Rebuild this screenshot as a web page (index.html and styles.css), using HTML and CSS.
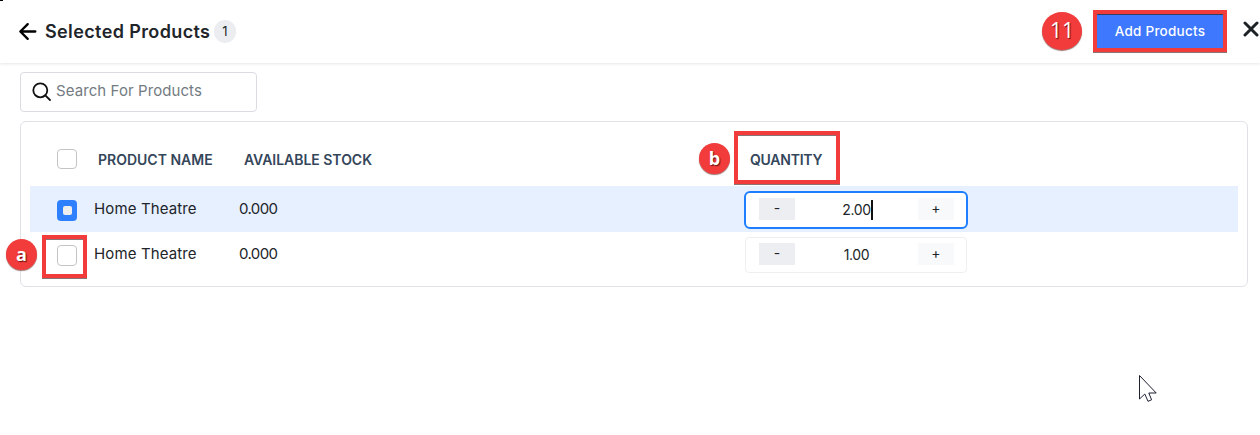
FILE: index.html
```html
<!DOCTYPE html>
<html lang="en">
<head>
<meta charset="utf-8">
<title>Selected Products</title>
<link rel="stylesheet" href="styles.css">
</head>
<body>
<header class="topbar">
  <svg class="back" viewBox="0 0 18 18"><path d="M9.2 2 L2.2 9 L9.2 16 M2.4 9 H16.4"/></svg>
  <h1 class="title">Selected Products</h1>
  <span class="count">1</span>
  <div class="actions">
    <div class="callout"><span class="marker marker-large">11</span></div>
    <button class="add"><span class="add-label">Add Products</span></button>
    <svg class="close" viewBox="0 0 16 16"><path d="M2 2 L14 14 M14 2 L2 14"/></svg>
  </div>
</header>
<main class="content">
  <div class="search">
    <svg class="lens" viewBox="0 0 20 20"><circle cx="8.3" cy="8.3" r="7"/><path d="M13.3 13.3 L18 18"/></svg>
    <span class="placeholder">Search For Products</span>
  </div>
  <section class="card">
    <div class="row head">
      <span class="check"></span>
      <span class="th name">PRODUCT NAME</span>
      <span class="th stock">AVAILABLE STOCK</span>
      <span class="th qty">QUANTITY</span>
    </div>
    <div class="row selected">
      <span class="check on"></span>
      <span class="td name">Home Theatre</span>
      <span class="td stock">0.000</span>
      <div class="stepper focus"><span class="minus">-</span><span class="value">2.00<i class="caret"></i></span><span class="plus">+</span></div>
    </div>
    <div class="row last">
      <span class="check"></span>
      <span class="td name">Home Theatre</span>
      <span class="td stock">0.000</span>
      <div class="stepper"><span class="minus">-</span><span class="value">1.00</span><span class="plus">+</span></div>
    </div>
  </section>
</main>
<span class="corner"></span>
<span class="marker mark-a">a</span>
<span class="marker mark-b">b</span>
<span class="frame frame-a"></span>
<span class="frame frame-b"></span>
<svg class="cursor" viewBox="0 0 20 30"><path d="M1.5 1.5 V25 L6.8 20 L10 27.3 L13.6 25.8 L10.8 19 H18.2 Z"/></svg>
</body>
</html>
```
FILE: styles.css
```css
* { box-sizing: border-box; }
body {
  margin: 0;
  height: 435px;
  overflow: hidden;
  position: relative;
  background: #fff;
  color: #212529;
  font-family: Inter, "Open Sans", sans-serif;
}
.topbar {
  height: 63px;
  display: flex;
  align-items: center;
  padding-left: 18px;
  box-shadow: 0 1px 3px rgba(0, 0, 0, .1);
}
.back { width: 19px; height: 19px; fill: none; stroke: #000; stroke-width: 2.2; stroke-linecap: round; stroke-linejoin: round; }
.title { margin: 0 0 0 8px; width: 165px; font-size: 18px; line-height: 27px; font-weight: 600; letter-spacing: .38px; white-space: nowrap; }
.count { margin-left: 4px; width: 22px; height: 23px; border-radius: 12px; background: #ecedf1; font-size: 13px; line-height: 22px; text-align: center; }
.actions { margin-left: auto; height: 63px; display: flex; align-items: center; }
.marker {
  display: block;
  width: 31px;
  height: 31px;
  border-radius: 50%;
  background: #f23b3b;
  color: #fff;
  font: 700 18px/31px "Open Sans", sans-serif;
  text-align: center;
  text-shadow: 1px 1px 1px #611;
  box-shadow: 0 1px 1px rgba(90, 30, 30, .6);
}
.marker-large { width: 40px; height: 38px; margin: 0 11px 2px 0; font-weight: 400; font-size: 21px; line-height: 37px; }
.add {
  width: 134px;
  height: 42px;
  padding: 0 0 1px;
  margin: 0 16px 1px 0;
  border: 4px solid #f23b3b;
  background: #3d78ff;
  color: #fff;
  box-shadow: 0 1px #8c7474, inset 0 1px #33405f;
  font: 500 13.5px Inter, sans-serif;
  letter-spacing: .25px;
  white-space: nowrap;
}
.close { width: 16px; height: 16px; margin: 0 1px 5px 0; fill: none; stroke: #1d2226; stroke-width: 3; stroke-linecap: round; }
.content { padding: 9px 12px 0 20px; }
.search { width: 237px; height: 40px; display: flex; align-items: center; padding-left: 11px; border: 1px solid #dadce2; border-radius: 4px; }
.lens { width: 20px; height: 20px; margin-right: 4px; fill: none; stroke: #111; stroke-width: 1.8; stroke-linecap: round; }
.placeholder { color: #737b82; font-size: 15px; line-height: 22px; letter-spacing: .08px; margin-bottom: 2px; white-space: nowrap; }
.card { margin-top: 9px; height: 166px; padding: 9px; border: 1px solid #dfe1e6; border-radius: 6px; }
.row { height: 45px; display: grid; grid-template-columns: 64px 145px 506px 222px 1fr; align-items: center; }
.head { height: 55px; }
.selected { height: 46px; background: #e7f0ff; }
.check { width: 20px; height: 20px; margin-left: 27px; border: 1px solid #c3c4c6; border-radius: 4px; background: #fff; }
.last .check { height: 21px; margin-top: 2px; }
.check.on { height: 21px; margin-top: 3px; display: grid; place-items: center; border: 0; background: #2f80ff; }
.check.on::before { content: ""; width: 9px; height: 9px; border-radius: 2px; background: #eee; }
.th { color: #34465a; font-size: 14px; line-height: 20px; font-weight: 600; white-space: nowrap; padding: 2px 0 0 4px; }
.th.stock { padding-left: 5px; letter-spacing: -.03px; }
.th.qty { padding-left: 5px; letter-spacing: -.25px; }
.td { font-size: 15px; line-height: 22px; white-space: nowrap; letter-spacing: .13px; }
.td.stock { letter-spacing: -.6px; }
.last .td { margin-bottom: 2px; }
.stepper { height: 36px; display: grid; grid-template-columns: 36px 1fr 36px; align-items: center; padding: 0 12px 0 13px; border: 1px solid #eeeff1; border-radius: 4px; background: #fff; text-align: center; font-size: 14px; }
.stepper.focus { width: 224px; height: 38px; margin: 2px 0 0 -1px; padding: 0 12px 0 13px; border: 2px solid #1f7dff; border-radius: 6px; }
.minus, .plus { height: 22px; line-height: 19px; margin-bottom: 2px; }
.minus { background: #edeef2; }
.plus { background: #f8f9fb; }
.value { line-height: 20px; letter-spacing: -.4px; }
.caret { display: inline-block; width: 2px; height: 20px; margin: -2px -2px 0 0; vertical-align: middle; background: #111; }
.frame { position: absolute; border: 4px solid #f23b3b; box-shadow: 0 1px #8c7474, inset 0 1px #8c7474; }
.frame-a { left: 42px; top: 235px; width: 45px; height: 43px; }
.frame-b { left: 734px; top: 131px; width: 106px; height: 53px; }
.mark-a { position: absolute; left: 6px; top: 239px; }
.mark-b { position: absolute; left: 699px; top: 143px; }
.corner { position: absolute; left: 0; top: 0; width: 3px; height: 1px; background: #000; }
.cursor { position: absolute; left: 1138px; top: 374px; width: 20px; height: 30px; fill: #fff; stroke: #1c2030; stroke-width: 1; }
```
